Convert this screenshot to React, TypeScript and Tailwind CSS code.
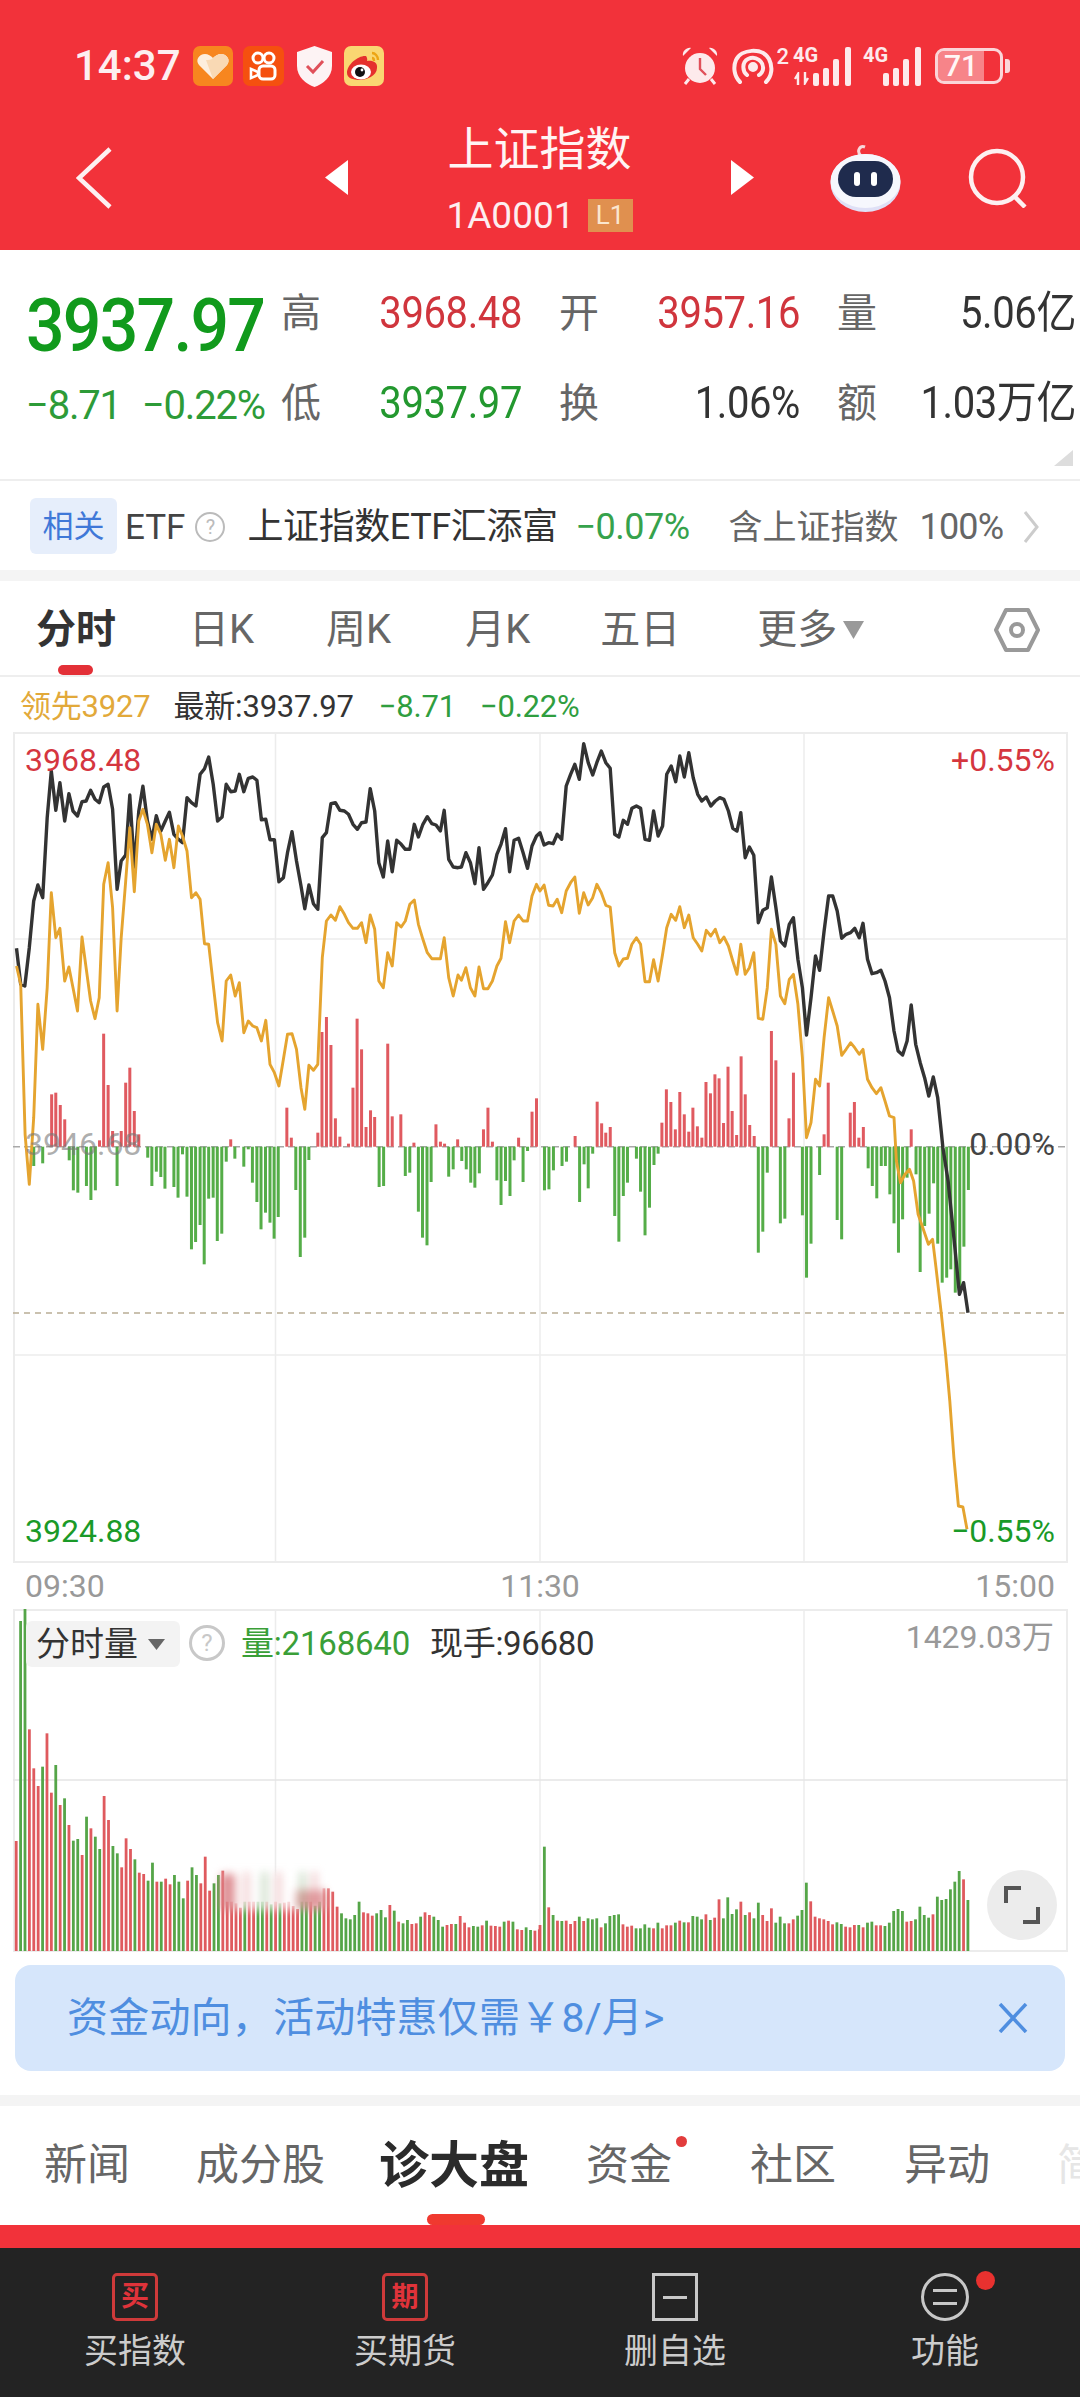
// trace helpers: chart data was read off the screenshot crops
const px = (zx: number) => zx / 2.904;
const pxR = (zx: number) => 540 + zx / 2.904;
const py = (zy: number) => 720 + zy / 3;
const vy = (zy: number) => 1640 + zy / 3;

const BLACK_L = [48,682,60,790,72,795,85,680,98,540,110,492,124,530,137,290,149,150,162,268,174,185,188,300,200,218,212,270,225,285,238,242,250,240,263,208,276,235,288,245,301,198,314,190,327,265,340,505,352,420,365,402,377,222,390,438,403,270,415,196,428,300,441,355,454,284,467,330,480,300,492,274,505,340,518,355,530,365,543,230,556,245,569,255,581,160,594,143,606,108,619,190,632,300,645,288,657,190,670,212,683,210,695,160,708,212,721,172,734,168,746,178,759,296,772,295,784,356,797,356,810,482,823,470,835,395,848,332,861,420,874,495,885,563,897,492,910,548,923,565,936,350,948,335,961,248,974,245,987,268,1000,270,1012,280,1025,310,1038,325,1050,305,1063,303,1075,203,1088,270,1100,425,1113,468,1126,360,1139,452,1152,358,1165,370,1177,385,1190,385,1203,310,1215,348,1228,310,1241,287,1254,308,1266,312,1279,330,1290,268,1303,415,1316,438,1330,440,1340,438,1353,395,1366,425,1379,488,1391,380,1404,505,1417,485,1430,462,1443,400,1455,370,1468,323,1480,452,1493,358,1506,352,1519,395,1532,442,1545,375,1558,345];
const BLACK_R = [0,335,12,372,25,365,38,368,50,340,63,355,76,195,89,160,101,130,114,175,127,68,140,125,153,162,165,125,178,90,191,125,204,142,217,340,229,348,242,298,254,310,267,262,280,255,292,262,305,355,318,358,330,270,343,345,356,315,368,160,381,135,394,182,406,105,419,168,432,95,445,170,458,220,470,240,483,228,496,255,509,240,522,230,534,235,547,270,560,322,572,330,583,275,596,410,608,378,621,403,634,605,647,568,660,560,672,468,685,560,698,660,711,675,724,610,736,590,749,715,762,800,774,942,787,830,800,705,812,748,825,630,838,525,850,525,863,570,876,652,889,640,902,635,914,622,927,650,938,607,951,715,964,758,977,755,990,748,1002,780,1015,830,1028,930,1040,990,1053,1002,1066,960,1078,852,1091,970,1104,1025,1117,1070,1129,1125,1142,1068,1155,1130,1165,1230,1170,1280,1185,1380,1195,1480,1205,1580,1218,1720,1230,1685,1243,1775];
const GOLD_L = [48,735,60,790,73,1240,85,1390,98,1190,110,850,124,985,137,800,149,515,162,650,174,622,188,780,200,738,212,800,225,870,238,648,250,740,263,840,276,893,288,830,301,490,314,425,327,560,340,870,352,650,365,480,377,320,390,512,403,300,415,265,428,310,441,395,454,310,467,340,480,418,492,355,505,440,518,315,530,345,543,390,556,530,569,515,581,535,594,668,606,670,619,790,632,905,645,960,657,780,670,762,683,825,695,785,708,935,721,900,734,915,746,920,759,960,772,898,784,1030,797,1055,810,1095,823,1015,835,940,848,938,861,985,874,1100,885,1165,897,1033,910,1048,923,1030,936,710,948,600,961,582,974,598,987,557,1000,580,1012,605,1025,622,1038,622,1050,605,1063,665,1075,582,1088,625,1100,780,1113,800,1126,695,1139,735,1152,605,1165,618,1177,600,1190,550,1203,537,1215,610,1228,655,1241,695,1254,713,1266,713,1279,713,1290,650,1303,770,1316,825,1330,762,1340,778,1353,740,1366,800,1379,825,1391,738,1404,803,1417,803,1430,780,1443,735,1455,712,1468,602,1480,665,1493,600,1506,582,1519,600,1532,600,1545,525,1558,490];
const GOLD_R = [0,510,12,492,25,553,38,555,50,535,63,575,76,510,89,485,101,468,114,577,127,515,140,552,153,530,165,490,178,515,191,553,204,558,217,695,229,735,242,714,254,712,267,670,280,650,292,670,305,782,318,782,330,716,343,780,356,700,368,620,381,580,394,598,406,557,419,620,432,582,445,650,458,670,470,690,483,628,496,645,509,625,522,665,534,648,547,675,560,720,572,760,583,670,596,760,608,740,621,695,634,892,647,895,660,800,672,625,685,670,698,825,711,848,724,775,736,760,749,850,762,1010,774,1250,787,1205,800,1075,812,1095,825,950,838,830,850,870,863,915,876,1003,889,985,902,965,914,980,927,1000,938,985,951,1075,964,1100,977,1118,990,1100,1002,1140,1015,1185,1028,1190,1035,1320,1047,1385,1060,1360,1073,1345,1085,1380,1098,1480,1110,1515,1128,1570,1140,1555,1150,1640,1165,1775,1178,1900,1190,2040,1202,2210,1215,2355,1228,2358,1240,2425];

const RED_L = [150,1120,162,1115,175,1152,188,1195,289,1258,301,938,314,1092,327,1230,352,1230,365,1085,377,1040,390,1170,403,1240,670,1255,833,1160,846,1250,923,1235,935,933,948,888,961,972,974,1192,987,1247,1012,1268,1025,1100,1037,893,1050,985,1063,1218,1076,1168,1088,1188,1126,968,1139,1186,1164,1180,1202,1265,1266,1210,1279,1262,1291,1268,1329,1255,1404,1225,1417,1160,1430,1262,1506,1250,1545,1172,1558,1132];
const RED_R = [102,1245,166,1142,179,1207,191,1235,204,1218,354,1205,367,1105,380,1143,393,1225,406,1113,419,1180,432,1232,444,1160,457,1216,470,1250,482,1083,495,1117,508,1060,520,1072,533,1206,546,1037,558,1170,571,1242,584,1006,596,1120,609,1212,622,1245,672,930,685,1018,723,1192,736,1055,825,1240,837,1085,901,1175,913,1143,926,1250,939,1218,1078,1225];
const GREEN_L = [98,105,124,97,201,88,213,178,226,185,251,165,264,207,277,178,340,165,429,80,441,165,454,122,467,138,479,173,505,168,517,200,530,70,543,197,556,355,568,333,581,282,593,400,606,203,619,200,631,330,644,308,657,92,682,83,708,107,721,55,733,155,746,213,758,295,771,245,784,275,796,323,808,258,859,177,872,378,885,320,897,87,1101,168,1114,165,1177,135,1190,125,1215,242,1227,320,1240,343,1252,153,1303,137,1316,115,1341,90,1354,115,1367,155,1379,170,1392,127,1443,148,1455,222,1468,150,1481,195,1493,88,1519,153,1532,60];
const GREEN_R = [13,178,26,175,39,118,64,105,77,92,115,213,128,100,140,172,153,68,217,255,229,332,242,195,254,155,280,83,292,182,305,313,318,230,331,102,343,68,634,365,647,302,660,125,698,277,711,263,762,253,774,440,787,338,812,132,863,267,876,325,953,112,965,165,978,202,991,105,1003,105,1016,190,1028,277,1041,365,1053,265,1066,140,1092,130,1104,423,1117,285,1130,248,1143,157,1155,338,1168,455,1181,440,1193,415,1206,485,1219,485,1231,347,1244,177];

const VOL_L = "r603 g-57 g-93 r268 r385 r438 g380 r280 r458 g375 r495 g475 r555 g602 g597 r645 g530 r565 g590 g627 r468 r540 g618 g640 r682 r595 r627 g658 r698 r702 g722 g668 r725 g725 r716 r733 g705 g725 g775 r722 g682 g705 r730 r650 r752 g730 g705 r692 r785 r785 r790 r803 g785 r785 r785 g785 g785 r785 g793 r785 g790 r788 r785 r798 r807 g785 g785 r785 g797 g785 r745 r745 r755 r800 g820 g835 g838 g825 g785 r817 r820 r827 g820 g810 g832 r795 g812 r845 g850 g840 r852 r850 g830 r817 r825 g830 g840 g860 r855 r852 g852 r828 r848 r862 g858 g860 r856 g842 r857 r858 r860 g845 r842 g845 r868 r870 g862 g870 r872 r868";
const VOL_R = "r855 g620 r802 g825 r842 g843 r842 r852 r843 g830 r843 g835 g838 g835 r862 g850 g828 g825 g823 r853 r860 r857 g865 g865 g853 g863 r865 g848 r865 r856 r856 g848 r842 g847 r847 g828 g830 g838 r823 g840 r833 r778 g835 g772 g822 g808 r785 g825 r817 g835 g788 r825 r843 r805 g848 g830 g850 r850 r838 g827 g810 g728 r784 r830 r835 r838 r843 r853 g847 g852 r860 r862 r855 g855 r862 g848 g845 r856 r856 g858 g848 g813 g807 g813 r845 r843 g838 g800 g825 g833 r823 g770 g780 g777 g748 g725 g693 r718 g780";

const pairs = (arr: number[]) => {
  const out: [number, number][] = [];
  for (let i = 0; i < arr.length; i += 2) out.push([arr[i], arr[i + 1]]);
  return out;
};

const line = (left: number[], right: number[]) =>
  [
    ...pairs(left).map(([x, y]) => `${px(x).toFixed(1)},${py(y).toFixed(1)}`),
    ...pairs(right).map(([x, y]) => `${pxR(x).toFixed(1)},${py(y).toFixed(1)}`),
  ].join(" ");

const ZERO_Y = 1145.7;

function ChartBars() {
  return (
    <>
      {pairs(RED_L).map(([x, y]) => (
        <rect key={`rl${x}`} x={px(x) - 1.5} y={py(y)} width="3" height={ZERO_Y - py(y)} fill="#e05a60" />
      ))}
      {pairs(RED_R).map(([x, y]) => (
        <rect key={`rr${x}`} x={pxR(x) - 1.5} y={py(y)} width="3" height={ZERO_Y - py(y)} fill="#e05a60" />
      ))}
      {pairs(GREEN_L).map(([x, y]) => (
        <rect key={`gl${x}`} x={px(x) - 1.5} y={ZERO_Y} width="3" height={y / 3 + 1130 - ZERO_Y} fill="#55ad48" />
      ))}
      {pairs(GREEN_R).map(([x, y]) => (
        <rect key={`gr${x}`} x={pxR(x) - 1.5} y={ZERO_Y} width="3" height={y / 3 + 1130 - ZERO_Y} fill="#55ad48" />
      ))}
    </>
  );
}

function PriceChart() {
  return (
    <div className="relative mx-[13px] mt-[2px] h-[831px] w-[1055px] border-2 border-[#ececec]">
      <svg className="absolute -left-[2px] -top-[2px]" width="1055" height="831" viewBox="13 731 1055 831">
        {[275.5, 540, 804].map((x) => (
          <line key={x} x1={x} x2={x} y1="731" y2="1561" stroke="#ececec" strokeWidth="1.5" />
        ))}
        <line x1="13" x2="1068" y1="938" y2="938" stroke="#ececec" strokeWidth="1.5" />
        <line x1="13" x2="1068" y1="1354" y2="1354" stroke="#ececec" strokeWidth="1.5" />
        <line x1="13" x2="1066" y1={ZERO_Y} y2={ZERO_Y} stroke="#a8a8a8" strokeWidth="1.5" strokeDasharray="7 4" />
        <line x1="13" x2="1068" y1="1312" y2="1312" stroke="#b9ad95" strokeWidth="1.5" strokeDasharray="6 5" />
        <ChartBars />
        <polyline points={line(BLACK_L, BLACK_R)} fill="none" stroke="#333333" strokeWidth="3.4" strokeLinejoin="round" />
        <polyline points={line(GOLD_L, GOLD_R)} fill="none" stroke="#e5a42f" strokeWidth="2.9" strokeLinejoin="round" />
      </svg>
      <span className="absolute left-[10px] top-[7px] text-[32px] leading-[38px] text-[#d5363f]">3968.48</span>
      <span className="absolute right-[11px] top-[7px] text-[32px] leading-[38px] text-[#d5363f]">+0.55%</span>
      <span className="absolute left-[10px] top-[391px] text-[32px] leading-[38px] text-[#77777799]">3946.68</span>
      <span className="absolute right-[11px] top-[391px] text-[32px] leading-[38px] text-[#444444]">0.00%</span>
      <span className="absolute bottom-[11px] left-[10px] text-[32px] leading-[38px] text-[#1a9a28]">3924.88</span>
      <span className="absolute bottom-[11px] right-[11px] text-[32px] leading-[38px] text-[#1a9a28]">−0.55%</span>
    </div>
  );
}

function VolumeChart() {
  const left = VOL_L.split(" ");
  const right = VOL_R.split(" ");
  const bar = (item: string, x: number) => {
    const top = vy(Number(item.slice(1)));
    return (
      <rect key={x} x={x - 1.4} y={top} width="2.8" height={1951 - top} fill={item[0] === "r" ? "#df5a5e" : "#55a548"} />
    );
  };
  return (
    <div className="relative mx-[13px] h-[343px] w-[1055px] border-x-2 border-y-2 border-[#ececec]">
      <svg className="absolute -left-[2px] -top-[2px]" width="1055" height="343" viewBox="13 1609 1055 343">
        {[275.5, 540, 804].map((x) => (
          <line key={x} x1={x} x2={x} y1="1609" y2="1951" stroke="#ececec" strokeWidth="1.5" />
        ))}
        <line x1="13" x2="1068" y1="1780" y2="1780" stroke="#e4e4e4" strokeWidth="1.5" />
        {left.map((item, i) => bar(item, 16.2 + 4.396 * i))}
        {right.map((item, i) => bar(item, pxR(i * 12.68)))}
        {/* smudged patch, it is in the screenshot too */}
        <g className="blur-[4px]">
          <rect x="221" y="1872" width="106" height="38" fill="#ffffff" opacity="0.8" />
          <rect x="221" y="1874" width="14" height="36" fill="#c8454c" opacity="0.6" />
          <rect x="296" y="1890" width="30" height="20" fill="#c8454c" opacity="0.5" />
          {[244, 262, 276, 300, 312].map((x, i) => (
            <rect key={x} x={x} y="1872" width="5" height="38" fill={i % 2 ? "#7da56f" : "#d98085"} opacity="0.45" />
          ))}
        </g>
      </svg>
      <div className="absolute left-[11px] top-[10px] flex h-[46px] w-[154px] items-center rounded-[6px] bg-[#f2f2f2]/95 pl-[10px] text-[34px] text-[#333]">
        分时量
        <svg className="ml-[10px]" width="17" height="11" viewBox="0 0 17 11">
          <path d="M0 0H17L8.5 11Z" fill="#666" />
        </svg>
      </div>
      <div className="absolute left-[174px] top-[14px] flex h-[36px] w-[36px] items-center justify-center rounded-full border-[3px] border-[#c8c8c8] text-[24px] leading-none text-[#c8c8c8]">
        ?
      </div>
      <div className="absolute left-[226px] top-[10px] flex h-[46px] items-center text-[33px] tracking-[-0.2px] text-[#3a9f38]">量:2168640</div>
      <div className="absolute left-[415px] top-[10px] flex h-[46px] items-center text-[33px] tracking-[-0.3px] text-[#333]">现手:96680</div>
      <div className="absolute right-[12px] top-[6px] text-[32px] leading-[40px] text-[#999]">1429.03万</div>
      <div className="absolute left-[972px] top-[259px] flex h-[70px] w-[70px] items-center justify-center rounded-full bg-[#ececec]">
        <svg width="36" height="38" viewBox="0 0 36 38" fill="none" stroke="#555" strokeWidth="4">
          <path d="M2 17V2H17" />
          <path d="M34 21V36H19" />
        </svg>
      </div>
    </div>
  );
}

function StatusIcons() {
  return (
    <div className="ml-[12px] flex items-center">
      <svg width="40" height="40" viewBox="0 0 40 40">
        <rect width="40" height="40" rx="7" fill="#f7861f" />
        <path d="M20 33 6 19c-4-5 0-11 6-11 3 0 6 2 8 4 2-2 5-4 8-4 6 0 10 6 6 11Z" fill="#fdeedd" />
        <path d="M20 33 13 14c3 0 5 0 7-2 2-2 5-4 8-4 6 0 10 6 6 11Z" fill="#f9d9b4" />
      </svg>
      <svg className="ml-[10px]" width="41" height="40" viewBox="0 0 41 40">
        <rect width="41" height="40" rx="7" fill="#f5500f" />
        <g fill="none" stroke="#fff" strokeWidth="3">
          <circle cx="15" cy="12" r="5" />
          <circle cx="26" cy="12" r="5" />
          <rect x="16" y="20" width="16" height="13" rx="4" />
        </g>
        <path d="M8 23 15 26V29L8 32Z" fill="none" stroke="#fff" strokeWidth="2.6" />
      </svg>
      <svg className="ml-[13px]" width="35" height="41" viewBox="0 0 35 41">
        <path d="M17.5 0 35 6V20C35 31 26 38 17.5 41 9 38 0 31 0 20V6Z" fill="#fdf3f4" />
        <path d="M10 20 16 26 26 15" fill="none" stroke="#e0505a" strokeWidth="3" />
      </svg>
      <svg className="ml-[12px]" width="40" height="40" viewBox="0 0 40 40">
        <rect width="40" height="40" rx="7" fill="#fad772" />
        <path d="M3 27c0-9 12-18 19-17 2 3 1 5 1 5 5-1 11 1 10 7 0 8-11 12-17 12-7 0-13-2-13-7Z" fill="#e5312d" />
        <ellipse cx="17" cy="26" rx="10" ry="7.5" fill="#fff" />
        <circle cx="16" cy="26" r="5" fill="#111" />
        <circle cx="18" cy="24" r="1.4" fill="#fff" />
        <path d="M28 7c3 0 6 3 6 7M28 12c1 0 2 1 2 3" fill="none" stroke="#eda514" strokeWidth="2.4" />
      </svg>
    </div>
  );
}

function Signal({ arrows }: { arrows?: boolean }) {
  return (
    <div className="relative h-[40px] w-[60px]">
      <span className="absolute -top-[2px] left-0 text-[20px] font-bold leading-[22px] text-[#fdeaec]">4G</span>
      {arrows ? (
        <svg className="absolute bottom-[1px] left-0" width="17" height="13" viewBox="0 0 17 13">
          <path d="M2 7 5 2V13M15 6 12 11V0" fill="none" stroke="#fdeaec" strokeWidth="2.4" />
        </svg>
      ) : null}
      <svg className="absolute bottom-0 right-0" width="40" height="40" viewBox="0 0 40 40">
        <g fill="#fdeaec">
          <rect x="0" y="27" width="6" height="13" rx="2" />
          <rect x="10" y="22" width="6" height="18" rx="2" />
          <rect x="20" y="13" width="6" height="27" rx="2" />
          <rect x="32" y="1" width="6" height="39" rx="2" />
        </g>
      </svg>
    </div>
  );
}

function StatusBar() {
  return (
    <div className="flex h-[122px] items-center justify-between pl-[74px] pr-[70px] pt-[10px]">
      <div className="flex items-center">
        <span className="text-[42px] font-medium leading-none text-[#fdeef0]">14:37</span>
        <StatusIcons />
      </div>
      <div className="flex items-center">
        <svg width="36" height="38" viewBox="0 0 36 38">
          <g fill="#fdeaec">
            <circle cx="18" cy="21" r="15" />
            <path d="M1 9 9 1c-4-1-9 3-8 8ZM35 9 27 1c4-1 9 3 8 8Z" />
            <path d="M7 32 3 37M29 32 33 37" stroke="#fdeaec" strokeWidth="3" />
          </g>
          <path d="M18 11V22L24 28" fill="none" stroke="#e0505a" strokeWidth="2.4" />
        </svg>
        <svg className="ml-[14px]" width="42" height="38" viewBox="0 0 42 38" fill="none" stroke="#fdeaec" strokeWidth="4" strokeLinecap="round">
          <path d="M8 35C2 29 1 20 4 13 9 2 30 0 37 12 41 20 40 29 34 35" />
          <path d="M15 28C10 24 10 15 16 12 24 8 32 15 31 22 31 24 29 27 27 28" />
          <circle cx="21" cy="20" r="3" fill="#fdeaec" />
        </svg>
        <span className="-mt-[18px] ml-[2px] text-[22px] font-medium leading-none text-[#fdeaec]">2</span>
        <div className="ml-[4px]">
          <Signal arrows />
        </div>
        <div className="ml-[10px]">
          <Signal />
        </div>
        <div className="relative ml-[12px] flex h-[36px] w-[68px] items-center overflow-hidden rounded-[9px] border-[3px] border-[#fbd5d8]">
          <div className="absolute inset-y-0 left-0 w-[46px] bg-[#fbd5d8]/50" />
          <span className="relative w-[46px] text-center text-[30px] font-medium leading-none text-[#fff6f6]">71</span>
        </div>
        <div className="ml-[2px] h-[14px] w-[5px] rounded-r-[3px] bg-[#fbd5d8]" />
      </div>
    </div>
  );
}

function TitleBar() {
  return (
    <div className="grid h-[128px] grid-cols-[325px_429px_1fr] items-center pb-[20px]">
      <div className="pl-[76px]">
        <svg width="36" height="62" viewBox="0 0 36 62" fill="none" stroke="#fdf0f1" strokeWidth="4.5">
          <path d="M34 2 3 31 34 60" />
        </svg>
      </div>
      <div className="flex items-center justify-between">
        <svg width="23" height="35" viewBox="0 0 23 35">
          <path d="M23 0V35L0 17.5Z" fill="#fff" />
        </svg>
        <div className="mt-[2px] flex flex-col items-center">
          <div className="text-[46px] leading-[50px] text-[#fff4f4]">上证指数</div>
          <div className="mt-[23px] flex h-[36px] items-center gap-[13px]">
            <span className="text-[37px] leading-none text-[#fdeef0]">1A0001</span>
            <span className="flex h-[33px] w-[45px] items-center justify-center bg-[#e0904f] text-[26px] leading-none text-[#fbe6cf]">L1</span>
          </div>
        </div>
        <svg width="23" height="35" viewBox="0 0 23 35">
          <path d="M0 0V35L23 17.5Z" fill="#fff" />
        </svg>
      </div>
      <div className="flex items-center pl-[76px]">
        <svg width="71" height="68" viewBox="0 0 71 68">
          <path d="M31 12C26 7 30 1 35 3" fill="none" stroke="#f7d9dc" strokeWidth="3" />
          <ellipse cx="35.5" cy="39" rx="35" ry="29" fill="#dfe0f6" />
          <ellipse cx="35.5" cy="37" rx="35" ry="27" fill="#f6f7fd" />
          <rect x="8" y="17" width="55" height="36" rx="18" fill="#1f2b4d" />
          <rect x="24" y="28" width="6" height="14" rx="3" fill="#fff" />
          <rect x="41" y="28" width="6" height="14" rx="3" fill="#fff" />
        </svg>
        <svg className="ml-[67px]" width="60" height="60" viewBox="0 0 60 60" fill="none" stroke="#fdf0f1" strokeWidth="4.5">
          <circle cx="29" cy="29" r="26" />
          <path d="M46 48 57 59" />
        </svg>
      </div>
    </div>
  );
}

const STATS = [
  [
    { label: "高", value: "3968.48", color: "text-[#d0353d]" },
    { label: "开", value: "3957.16", color: "text-[#d0353d]" },
    { label: "量", value: "5.06亿", color: "text-[#333]" },
  ],
  [
    { label: "低", value: "3937.97", color: "text-[#23982f]" },
    { label: "换", value: "1.06%", color: "text-[#333]" },
    { label: "额", value: "1.03万亿", color: "text-[#333]" },
  ],
];

function Quote() {
  return (
    <div className="relative flex h-[231px] border-b-2 border-[#eeeeee] pl-[26px]">
      <div className="w-[255px] shrink-0">
        <div className="mt-[46px] h-[60px] origin-center scale-y-[1.1] text-[68px] font-medium leading-[60px] tracking-[-1.8px] text-[#119a1c]">3937.97</div>
        <div className="mt-[30px] flex h-[40px] items-center gap-[21px] whitespace-nowrap text-[40px] leading-none tracking-[-1.2px] text-[#2d9b38]">
          <span>−8.71</span>
          <span>−0.22%</span>
        </div>
      </div>
      <div className="mt-[44px] flex w-[795px] shrink-0 flex-col gap-[50px]">
        {STATS.map((row, r) => (
          <div key={r} className="flex h-[40px] gap-[37px]">
            {row.map((cell, i) => (
              <div key={cell.label} className={`flex items-center justify-between ${i === 2 ? "w-[239px]" : "w-[241px]"}`}>
                <span className="text-[40px] leading-none text-[#666]">{cell.label}</span>
                <span className={`scale-y-[1.1] whitespace-nowrap text-[40px] leading-none tracking-[-0.4px] ${cell.color}`}>{cell.value}</span>
              </div>
            ))}
          </div>
        ))}
      </div>
      <svg className="absolute bottom-[13px] right-[7px]" width="19" height="16" viewBox="0 0 19 16">
        <path d="M19 0V16H0Z" fill="#dddddd" />
      </svg>
    </div>
  );
}

function EtfRow() {
  return (
    <div className="flex h-[89px] items-center whitespace-nowrap pl-[30px] pt-[3px]">
      <span className="-mt-[3px] flex h-[56px] w-[87px] items-center justify-center rounded-[6px] bg-[#e6eefb] pt-[3px] text-[31px] text-[#3f78d8]">相关</span>
      <span className="ml-[8px] text-[35px] leading-none text-[#444]">ETF</span>
      <span className="ml-[10px] flex h-[30px] w-[30px] items-center justify-center rounded-full border-2 border-[#bbb] text-[20px] leading-none text-[#bbb]">?</span>
      <span className="ml-[22px] w-[305px] text-[36px] leading-none tracking-[-0.4px] text-[#333]">上证指数ETF汇添富</span>
      <span className="ml-[23px] w-[115px] text-[36px] leading-none tracking-[-0.5px] text-[#36a24c]">−0.07%</span>
      <span className="ml-[38px] w-[172px] text-[34px] leading-none text-[#666]">含上证指数</span>
      <span className="ml-[19px] text-[36px] leading-none tracking-[-0.8px] text-[#666]">100%</span>
      <svg className="ml-[20px]" width="16" height="32" viewBox="0 0 16 32" fill="none" stroke="#cccccc" strokeWidth="3">
        <path d="M2 1 14 16 2 31" />
      </svg>
    </div>
  );
}

function PeriodTabs() {
  return (
    <div className="relative flex h-[96px] items-center border-b-2 border-[#eeeeee] pt-[4px] text-[40px] leading-none text-[#666]">
      <span className="ml-[36px] font-bold text-[#333]">分时</span>
      <span className="ml-[73px]">日K</span>
      <span className="ml-[72px]">周K</span>
      <span className="ml-[74px]">月K</span>
      <span className="ml-[70px]">五日</span>
      <span className="ml-[77px]">更多</span>
      <svg className="ml-[6px]" width="21" height="18" viewBox="0 0 21 18">
        <path d="M0 0H21L10.5 18Z" fill="#999" />
      </svg>
      <svg className="ml-[130px]" width="46" height="44" viewBox="0 0 46 44" fill="none" stroke="#999" strokeWidth="4">
        <path d="M12 2H34L44 22 34 42H12L2 22Z" strokeLinejoin="round" />
        <circle cx="23" cy="22" r="6" />
      </svg>
      <div className="absolute bottom-0 left-[58px] h-[10px] w-[35px] rounded-full bg-[#e33037]" />
    </div>
  );
}

function InfoRow() {
  return (
    <div className="flex h-[53px] items-center whitespace-nowrap pt-[5px] text-[31px] leading-none tracking-[-0.2px]">
      <span className="ml-[20px] text-[#e2a93a]">领先3927</span>
      <span className="ml-[23px] text-[#333]">最新:3937.97</span>
      <span className="ml-[25px] text-[#2f9e3f]">−8.71</span>
      <span className="ml-[24px] text-[#2f9e3f]">−0.22%</span>
    </div>
  );
}

function Banner() {
  return (
    <div className="mx-[15px] mt-[13px] flex h-[106px] items-center justify-between rounded-[16px] bg-[#d6e6fb] pl-[52px] pr-[37px]">
      <span className="whitespace-nowrap text-[41px] leading-none tracking-[0.2px] text-[#4f8ee0]">资金动向，活动特惠仅需￥8/月&gt;</span>
      <svg width="30" height="30" viewBox="0 0 30 30" fill="none" stroke="#4f8ee0" strokeWidth="3.5">
        <path d="M2 1 28 29M28 1 2 29" />
      </svg>
    </div>
  );
}

function NewsTabs() {
  return (
    <div className="relative flex h-[119px] items-center overflow-hidden whitespace-nowrap text-[43px] leading-none text-[#666]">
      <span className="ml-[44px] shrink-0">新闻</span>
      <span className="ml-[66px] shrink-0">成分股</span>
      <span className="ml-[54px] shrink-0 text-[50px] font-bold text-[#2b2b2b]">诊大盘</span>
      <span className="relative ml-[57px] shrink-0">
        资金
        <span className="absolute -right-[15px] -top-[8px] h-[11px] w-[11px] rounded-full bg-[#e23c3c]" />
      </span>
      <span className="ml-[78px] shrink-0">社区</span>
      <span className="ml-[68px] shrink-0">异动</span>
      <span className="ml-[67px] shrink-0 text-[#e6e6e6]">简</span>
      <div className="absolute bottom-0 left-[427px] h-[11px] w-[58px] rounded-full bg-[#f0392f]" />
    </div>
  );
}

function BottomNav() {
  return (
    <div className="grid h-[150px] grid-cols-4 bg-[#232323] pt-[25px]">
      <div className="flex flex-col items-center">
        <span className="flex h-[48px] w-[46px] items-center justify-center rounded-[5px] border-[3px] border-[#cf3a3a] text-[28px] font-bold leading-none text-[#e0333a]">买</span>
        <span className="mt-[10px] text-[34px] leading-[40px] text-[#cccccc]">买指数</span>
      </div>
      <div className="flex flex-col items-center">
        <span className="flex h-[48px] w-[46px] items-center justify-center rounded-[5px] border-[3px] border-[#cf3a3a] text-[27px] font-bold leading-none text-[#e0333a]">期</span>
        <span className="mt-[10px] text-[34px] leading-[40px] text-[#cccccc]">买期货</span>
      </div>
      <div className="flex flex-col items-center">
        <span className="flex h-[48px] w-[46px] items-center justify-center border-[3px] border-[#c8c8c8]">
          <span className="h-[3px] w-[24px] bg-[#c8c8c8]" />
        </span>
        <span className="mt-[10px] text-[34px] leading-[40px] text-[#cccccc]">删自选</span>
      </div>
      <div className="flex flex-col items-center">
        <span className="relative flex h-[48px] w-[48px] flex-col items-center justify-center gap-[10px] rounded-full border-[3px] border-[#c8c8c8]">
          <span className="h-[3px] w-[24px] bg-[#c8c8c8]" />
          <span className="h-[3px] w-[24px] bg-[#c8c8c8]" />
          <span className="absolute -right-[29px] -top-[5px] h-[19px] w-[19px] rounded-full bg-[#e8312f]" />
        </span>
        <span className="mt-[10px] text-[34px] leading-[40px] text-[#cccccc]">功能</span>
      </div>
    </div>
  );
}

export default function App() {
  return (
    <div className="h-[2397px] w-[1080px] overflow-hidden bg-white font-['Roboto','Noto_Sans_CJK_SC',sans-serif]">
      <header className="h-[250px] bg-[#f2323a]">
        <StatusBar />
        <TitleBar />
      </header>
      <Quote />
      <EtfRow />
      <div className="h-[11px] bg-[#f4f4f4]" />
      <PeriodTabs />
      <InfoRow />
      <PriceChart />
      <div className="flex h-[46px] items-center justify-between px-[25px] text-[32px] leading-none text-[#999]">
        <span>09:30</span>
        <span>11:30</span>
        <span>15:00</span>
      </div>
      <VolumeChart />
      <Banner />
      <div className="mt-[24px] h-[11px] bg-[#f4f4f4]" />
      <NewsTabs />
      <div className="h-[23px] bg-[#f2323a]" />
      <BottomNav />
    </div>
  );
}
